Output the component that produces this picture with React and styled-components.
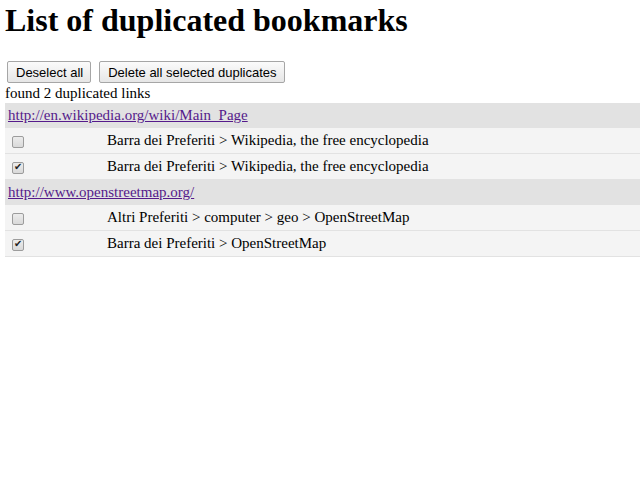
import React, { useState } from "react";
import styled, { createGlobalStyle } from "styled-components";

const GlobalStyle = createGlobalStyle`
  body {
    margin: 0;
    padding: 2px 0 0 5px;
    background: #fff;
    color: #000;
    font-family: "Liberation Serif", "Times New Roman", serif;
    font-size: 15px;
  }
`;

const groups = [
  {
    url: "http://en.wikipedia.org/wiki/Main_Page",
    items: [
      { path: "Barra dei Preferiti > Wikipedia, the free encyclopedia", checked: false },
      { path: "Barra dei Preferiti > Wikipedia, the free encyclopedia", checked: true },
    ],
  },
  {
    url: "http://www.openstreetmap.org/",
    items: [
      { path: "Altri Preferiti > computer > geo > OpenStreetMap", checked: false },
      { path: "Barra dei Preferiti > OpenStreetMap", checked: true },
    ],
  },
];

const App = () => {
  const [data, setData] = useState(groups);

  const toggle = (g, i) => {
    setData(
      data.map((group, gi) =>
        gi !== g
          ? group
          : {
              ...group,
              items: group.items.map((it, ii) =>
                ii === i ? { ...it, checked: !it.checked } : it
              ),
            }
      )
    );
  };

  return (
    <>
      <GlobalStyle />
      <Title>List of duplicated bookmarks</Title>
      <Toolbar>
        <Button>Deselect all</Button>
        <Button>Delete all selected duplicates</Button>
      </Toolbar>
      <Found>found 2 duplicated links</Found>
      <Table>
        <tbody>
          {data.map((group, g) => (
            <React.Fragment key={group.url}>
              <UrlRow>
                <td colSpan={2}>
                  <Link href="#">{group.url}</Link>
                </td>
              </UrlRow>
              {group.items.map((item, i) => (
                <ItemRow key={i}>
                  <CheckCell>
                    <Check
                      type="checkbox"
                      checked={item.checked}
                      onChange={() => toggle(g, i)}
                    />
                  </CheckCell>
                  <PathCell>{item.path}</PathCell>
                </ItemRow>
              ))}
            </React.Fragment>
          ))}
        </tbody>
      </Table>
    </>
  );
};

export default App;

const Title = styled.h1`
  font-size: 32px;
  font-weight: bold;
  margin: 0 0 22px 0;
  line-height: 37px;
`;

const Toolbar = styled.div`
  display: flex;
  gap: 8px;
  padding-left: 2px;
`;

const Button = styled.button`
  font-family: "Liberation Sans", Arial, sans-serif;
  font-size: 13px;
  height: 22px;
  padding: 0 7px 0 8px;
  border: 1px solid #a6a6a6;
  border-radius: 2px;
  background: linear-gradient(#fbfbfb, #e6e6e6);
  color: #000;
`;

const Found = styled.div`
  line-height: 19px;
  margin-top: 1px;
`;

const Table = styled.table`
  width: 635px;
  border-collapse: collapse;
`;

const UrlRow = styled.tr`
  background: #e2e2e2;
  td {
    height: 25px;
    padding: 0 3px;
  }
`;

const Link = styled.a`
  color: #551a8b;
  text-decoration: underline;
`;

const ItemRow = styled.tr`
  background: #f4f4f4;
  border-bottom: 1px solid #e2e2e2;
  td {
    height: 25px;
    padding: 0;
  }
`;

const CheckCell = styled.td`
  width: 95px;
  padding-left: 7px !important;
`;

const Check = styled.input`
  appearance: none;
  position: relative;
  margin: 0;
  width: 12px;
  height: 12px;
  vertical-align: middle;
  border: 1px solid #9c9c9c;
  border-radius: 2px;
  background: linear-gradient(#ececec, #d9d9d9);
  &:checked::after {
    content: "✔";
    position: absolute;
    left: 1px;
    top: -2px;
    font-family: "DejaVu Sans", sans-serif;
    font-size: 10px;
    color: #222;
  }
`;

const PathCell = styled.td``;
